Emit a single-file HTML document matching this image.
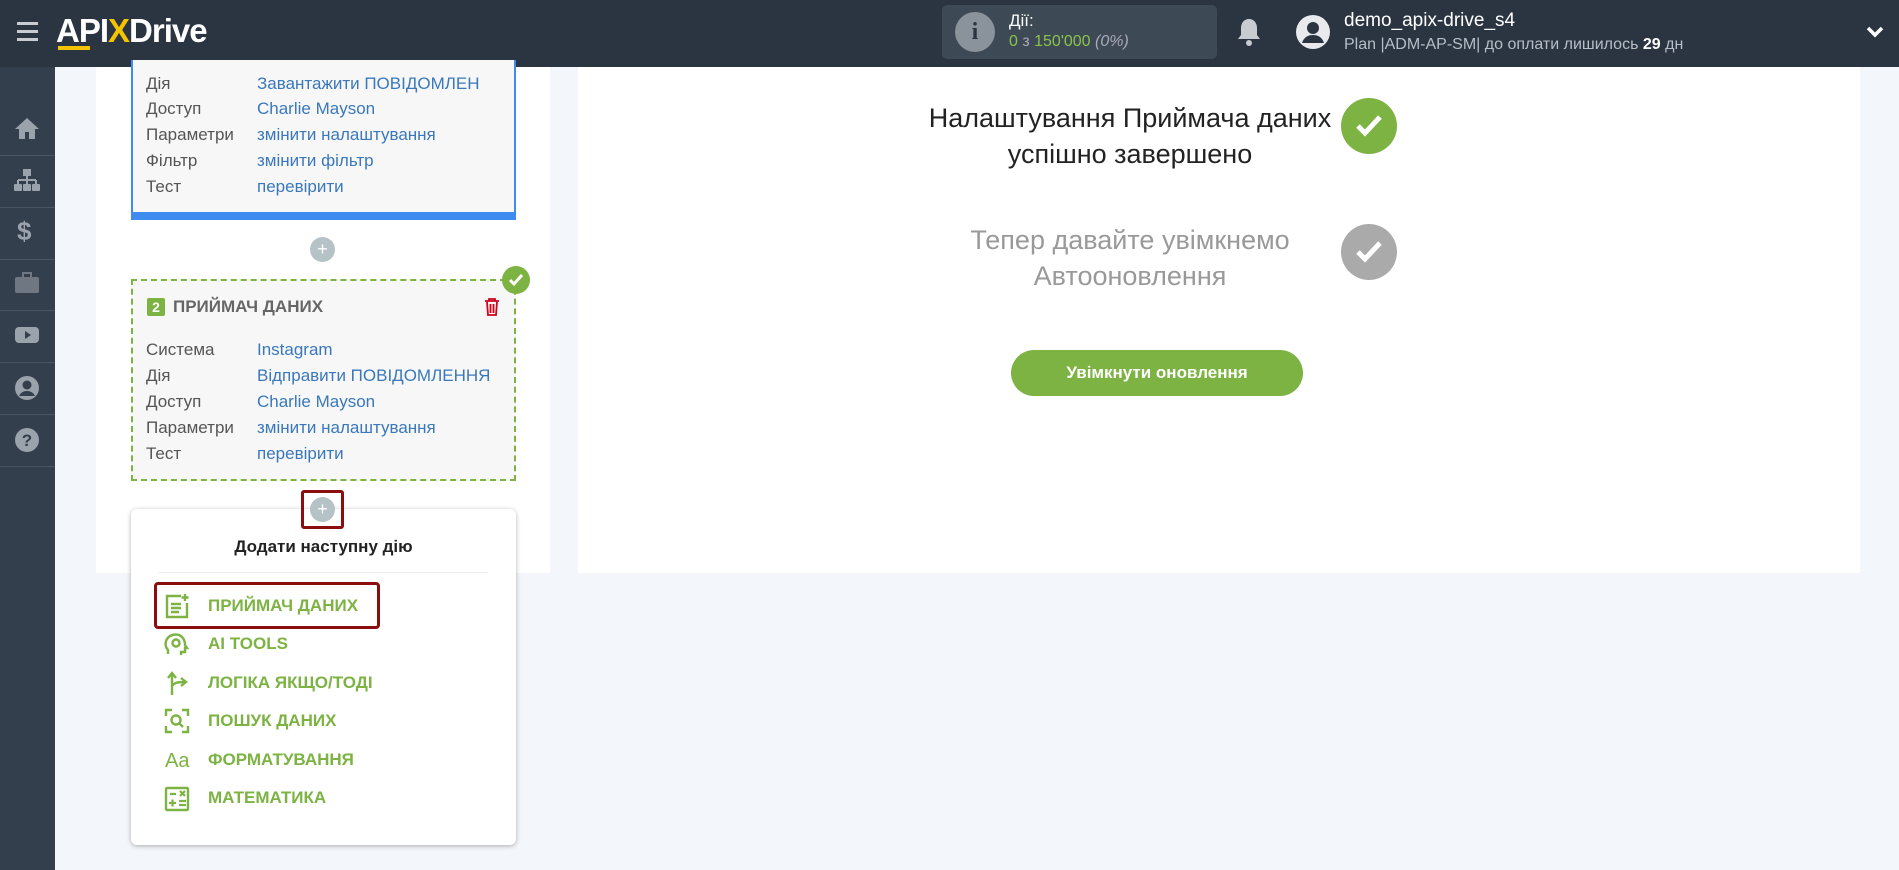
<!DOCTYPE html>
<html><head><meta charset="utf-8"><style>
*{box-sizing:border-box;margin:0;padding:0}
body{width:1899px;height:870px;overflow:hidden;background:#f3f6fa;font-family:"Liberation Sans",sans-serif;position:relative}
.abs{position:absolute}
.hdr{left:0;top:0;width:1899px;height:67px;background:#2b3542}
.sb{left:0;top:67px;width:55px;height:803px;background:#343f4d}
.sep{position:absolute;left:0;width:55px;height:1px;background:#4a5563}
.ic{position:absolute;left:13px;width:28px;height:28px}
.panel{background:#fff}
.row{position:absolute;font-size:17px;white-space:nowrap}
.lab{color:#555}
.val{color:#3a78bb}
.mi{position:absolute;left:208px;font-size:17px;font-weight:bold;color:#7cb342;white-space:nowrap}
.mic{position:absolute;left:164px;width:26px;height:26px}
</style></head><body>
<div class="abs hdr"></div>
<div class="abs" style="left:17px;top:22px;width:21px;height:3px;background:#c8ccd1;box-shadow:0 8px 0 #c8ccd1,0 16px 0 #c8ccd1"></div>
<div class="abs" style="left:56px;top:12px;font-size:33px;font-weight:bold;color:#fff;letter-spacing:-1px">API<span style="color:#f5c400">X</span>Drive</div>
<div class="abs" style="left:58px;top:46px;width:32px;height:4px;background:#f5c400"></div>
<div class="abs" style="left:942px;top:5px;width:275px;height:54px;background:#3d4955;border-radius:5px"></div>
<div class="abs" style="left:955px;top:12px;width:40px;height:40px;border-radius:50%;background:#8a939c;color:#2b3542;font-weight:bold;font-size:24px;text-align:center;line-height:40px;font-family:'Liberation Serif',serif">i</div>
<div class="abs" style="left:1009px;top:11px;color:#fff;font-size:17px">Дії:</div>
<div class="abs" style="left:1009px;top:33px;color:#8bc34a;font-size:16px">0 <span style="color:#aab">з</span> 150'000 <i style="color:#aab">(0%)</i></div>
<svg class="abs" style="left:1237px;top:17px" width="24" height="30" viewBox="0 0 24 30"><path d="M12 2c-5 0-8 4-8 9v7l-3 4h22l-3-4v-7c0-5-3-9-8-9z" fill="#c8ccd1"/><circle cx="12" cy="26" r="3" fill="#c8ccd1"/></svg>
<svg class="abs" style="left:1295px;top:14px" width="36" height="36" viewBox="0 0 36 36"><circle cx="18" cy="18" r="17" fill="#e8eaed"/><circle cx="18" cy="14" r="6" fill="#2b3542"/><path d="M7 29c2-6 6-8 11-8s9 2 11 8" fill="#2b3542"/></svg>
<div class="abs" style="left:1344px;top:10px;color:#fff;font-size:19px">demo_apix-drive_s4</div>
<div class="abs" style="left:1344px;top:36px;color:#b7bec6;font-size:16px">Plan |ADM-AP-SM| до оплати лишилось <b style="color:#fff">29</b> дн</div>
<svg class="abs" style="left:1866px;top:25px" width="18" height="14" viewBox="0 0 18 14"><path d="M2 3l7 7 7-7" stroke="#fff" stroke-width="3.5" fill="none"/></svg>

<div class="abs sb"></div>
<div class="sep" style="top:155px"></div><div class="sep" style="top:207px"></div><div class="sep" style="top:259px"></div><div class="sep" style="top:310px"></div><div class="sep" style="top:362px"></div><div class="sep" style="top:414px"></div><div class="sep" style="top:466px"></div>
<svg class="ic" style="top:114px" viewBox="0 0 28 28"><path d="M14 4L2 15h4v10h6v-7h4v7h6V15h4z" fill="#9aa2ab"/></svg>
<svg class="ic" style="top:166px" viewBox="0 0 28 28"><rect x="10" y="3" width="8" height="7" fill="#9aa2ab"/><path d="M14 10v4M5 14h18M5 14v4M14 14v4M23 14v4" stroke="#9aa2ab" stroke-width="2" fill="none"/><rect x="1" y="18" width="8" height="7" rx="1" fill="#9aa2ab"/><rect x="10" y="18" width="8" height="7" rx="1" fill="#9aa2ab"/><rect x="19" y="18" width="8" height="7" rx="1" fill="#9aa2ab"/></svg>
<div class="abs" style="left:17px;top:216px;color:#9aa2ab;font-size:26px;font-weight:bold">$</div>
<svg class="ic" style="top:269px" viewBox="0 0 28 28"><rect x="2" y="8" width="24" height="16" rx="2" fill="#6f7882"/><rect x="10" y="4" width="8" height="5" fill="none" stroke="#6f7882" stroke-width="2"/></svg>
<svg class="ic" style="top:321px" viewBox="0 0 28 28"><rect x="2" y="6" width="24" height="16" rx="4" fill="#9aa2ab"/><path d="M12 10v8l6-4z" fill="#343f4d"/></svg>
<svg class="ic" style="top:374px" viewBox="0 0 28 28"><circle cx="14" cy="14" r="12" fill="#9aa2ab"/><circle cx="14" cy="11" r="4.5" fill="#343f4d"/><path d="M6 22c2-4 5-5 8-5s6 1 8 5" fill="#343f4d"/></svg>
<svg class="ic" style="top:426px" viewBox="0 0 28 28"><circle cx="14" cy="14" r="12" fill="#9aa2ab"/><text x="14" y="20" font-size="17" font-weight="bold" fill="#343f4d" text-anchor="middle" font-family="Liberation Sans">?</text></svg>

<div class="abs panel" style="left:96px;top:67px;width:454px;height:506px"></div>
<div class="abs panel" style="left:578px;top:67px;width:1282px;height:506px"></div>

<!-- blue card -->
<div class="abs" style="left:131px;top:60px;width:385px;height:160px;background:#f7f7f7;border:2px solid #3f8cf0;border-top:none;border-bottom:8px solid #3f8cf0"></div>
<div class="row lab" style="left:146px;top:74px">Дія</div><div class="row val" style="left:257px;top:74px">Завантажити ПОВІДОМЛЕН</div>
<div class="row lab" style="left:146px;top:99px">Доступ</div><div class="row val" style="left:257px;top:99px">Charlie Mayson</div>
<div class="row lab" style="left:146px;top:125px">Параметри</div><div class="row val" style="left:257px;top:125px">змінити налаштування</div>
<div class="row lab" style="left:146px;top:151px">Фільтр</div><div class="row val" style="left:257px;top:151px">змінити фільтр</div>
<div class="row lab" style="left:146px;top:177px">Тест</div><div class="row val" style="left:257px;top:177px">перевірити</div>

<div class="abs" style="left:310px;top:237px;width:25px;height:25px;border-radius:50%;background:#b5c2c6;color:#fff;text-align:center;line-height:25px;font-size:18px">+</div>

<!-- green dashed card -->
<div class="abs" style="left:131px;top:279px;width:385px;height:202px;background:#f7f7f7;border:2px dashed #7cb342"></div>
<div class="abs" style="left:502px;top:266px;width:28px;height:28px;border-radius:50%;background:#7cb342"></div>
<svg class="abs" style="left:508px;top:273px" width="16" height="14" viewBox="0 0 16 14"><path d="M2 7l4 4 8-9" stroke="#fff" stroke-width="3" fill="none"/></svg>
<div class="abs" style="left:147px;top:298px;width:18px;height:18px;background:#7cb342;color:#fff;font-weight:bold;font-size:14px;text-align:center;line-height:18px;border-radius:2px">2</div>
<div class="abs" style="left:173px;top:297px;font-size:17px;font-weight:bold;color:#666">ПРИЙМАЧ ДАНИХ</div>
<svg class="abs" style="left:484px;top:298px" width="16" height="18" viewBox="0 0 16 18"><path d="M1 3h14M5 3V1h6v2M3 4l1 13h8l1-13M6.5 6v9M9.5 6v9" stroke="#d0021b" stroke-width="1.8" fill="none"/></svg>
<div class="row lab" style="left:146px;top:340px">Система</div><div class="row val" style="left:257px;top:340px">Instagram</div>
<div class="row lab" style="left:146px;top:366px">Дія</div><div class="row val" style="left:257px;top:366px;width:234px;overflow:hidden">Відправити ПОВІДОМЛЕННЯ</div>
<div class="row lab" style="left:146px;top:392px">Доступ</div><div class="row val" style="left:257px;top:392px">Charlie Mayson</div>
<div class="row lab" style="left:146px;top:418px">Параметри</div><div class="row val" style="left:257px;top:418px">змінити налаштування</div>
<div class="row lab" style="left:146px;top:444px">Тест</div><div class="row val" style="left:257px;top:444px">перевірити</div>

<!-- dropdown -->
<div class="abs" style="left:131px;top:509px;width:385px;height:336px;background:#fff;border-radius:6px;box-shadow:0 1px 5px rgba(0,0,0,.3)"></div>
<div class="abs" style="left:310px;top:497px;width:25px;height:25px;border-radius:50%;background:#b5c2c6;color:#fff;text-align:center;line-height:25px;font-size:18px">+</div>
<div class="abs" style="left:301px;top:490px;width:43px;height:39px;border:3px solid #8b0d0d;border-radius:3px"></div>
<div class="abs" style="left:131px;top:537px;width:385px;text-align:center;font-size:17px;font-weight:bold;color:#222">Додати наступну дію</div>
<div class="abs" style="left:158px;top:572px;width:330px;height:1px;background:#eee"></div>
<div class="abs" style="left:154px;top:582px;width:226px;height:47px;border:3px solid #8b0d0d;border-radius:4px"></div>
<svg class="mic" style="top:593px" viewBox="0 0 26 26"><path d="M17 3H3v21h20V10" stroke="#7cb342" stroke-width="2.4" fill="none"/><path d="M7 11h10M7 15h10M7 19h8M21 1v7M17.5 4.5h7" stroke="#7cb342" stroke-width="2.4"/></svg>
<div class="mi" style="top:596px">ПРИЙМАЧ ДАНИХ</div>
<svg class="mic" style="top:632px" viewBox="0 0 26 26"><path d="M4 22v-4C1 15 1 10 3 7c3-5 11-6 15-2 3 3 3 6 3 8l2 3h-2v4h-4v3" stroke="#7cb342" stroke-width="2.4" fill="none"/><circle cx="12" cy="11" r="3.5" stroke="#7cb342" stroke-width="2.4" fill="none"/></svg>
<div class="mi" style="top:634px">AI TOOLS</div>
<svg class="mic" style="top:670px" viewBox="0 0 26 26"><path d="M8 25V4M4 8l4-5 4 5M8 16c2-3 5-4 12-4M17 8l5 4-5 4" stroke="#7cb342" stroke-width="2.4" fill="none"/></svg>
<div class="mi" style="top:673px">ЛОГІКА ЯКЩО/ТОДІ</div>
<svg class="mic" style="top:708px" viewBox="0 0 26 26"><path d="M2 8V2h6M18 2h6v6M24 18v6h-6M8 24H2v-6" stroke="#7cb342" stroke-width="2.4" fill="none"/><circle cx="12" cy="12" r="4.5" stroke="#7cb342" stroke-width="2.4" fill="none"/><path d="M15 15l4 4" stroke="#7cb342" stroke-width="2.4"/></svg>
<div class="mi" style="top:711px">ПОШУК ДАНИХ</div>
<div class="abs" style="left:165px;top:750px;font-size:20px;color:#7cb342">Aa</div>
<div class="mi" style="top:750px">ФОРМАТУВАННЯ</div>
<svg class="mic" style="top:786px" viewBox="0 0 26 26"><rect x="2" y="2" width="22" height="22" rx="1" stroke="#7cb342" stroke-width="2.4" fill="none"/><path d="M6 8h6M16 5l5 5M21 5l-5 5M5 17h7M8.5 13.5v7M15 15h7M15 19h7" stroke="#7cb342" stroke-width="2.2"/></svg>
<div class="mi" style="top:788px">МАТЕМАТИКА</div>

<!-- right -->
<div class="abs" style="left:900px;top:100px;width:460px;text-align:center;font-size:27px;color:#222;line-height:36px">Налаштування Приймача даних<br>успішно завершено</div>
<div class="abs" style="left:1341px;top:98px;width:56px;height:56px;border-radius:50%;background:#7cb342"></div>
<svg class="abs" style="left:1355px;top:113px" width="28" height="26" viewBox="0 0 28 26"><path d="M3 13l7 7 15-16" stroke="#fff" stroke-width="5" fill="none"/></svg>
<div class="abs" style="left:900px;top:222px;width:460px;text-align:center;font-size:27px;color:#999;line-height:36px">Тепер давайте увімкнемо<br>Автооновлення</div>
<div class="abs" style="left:1341px;top:224px;width:56px;height:56px;border-radius:50%;background:#aaa"></div>
<svg class="abs" style="left:1355px;top:239px" width="28" height="26" viewBox="0 0 28 26"><path d="M3 13l7 7 15-16" stroke="#fff" stroke-width="5" fill="none"/></svg>
<div class="abs" style="left:1011px;top:350px;width:292px;height:46px;border-radius:23px;background:#7cb342;color:#fff;font-weight:bold;font-size:17px;text-align:center;line-height:46px">Увімкнути оновлення</div>
</body></html>
